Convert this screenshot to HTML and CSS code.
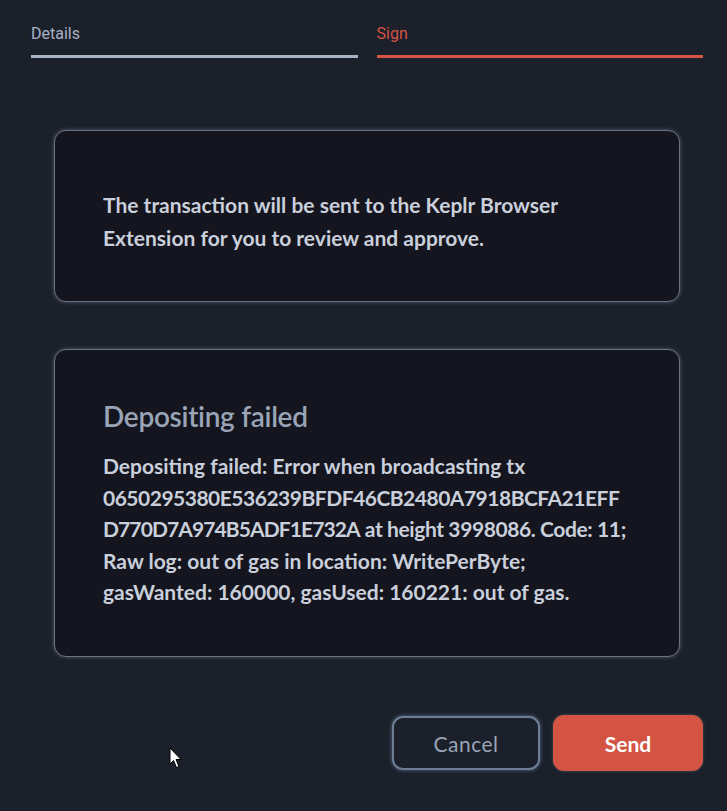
FILE: index.html
```html
<!DOCTYPE html>
<html>
<head>
<meta charset="utf-8">
<link rel="stylesheet" href="styles.css">
</head>
<body>
<div class="page">
  <div class="tabs">
    <div class="tab done">Details</div>
    <div class="tab active">Sign</div>
  </div>
  <div class="card info">
    <p class="text">The transaction will be sent to the Keplr Browser<br>Extension for you to review and approve.</p>
  </div>
  <div class="card error">
    <h2 class="title">Depositing failed</h2>
    <p class="text">Depositing failed: Error when broadcasting tx<br><span class="hex">0650295380E536239BFDF46CB2480A7918BCFA21EFF</span><br><span class="hex tight">D770D7A974B5ADF1E732A</span> <span class="tight">at height 3998086. Code: 11;</span><br>Raw log: out of gas in location: WritePerByte;<br>gasWanted: 160000, gasUsed: 160221: out of gas.</p>
  </div>
  <div class="actions">
    <button class="btn cancel">Cancel</button>
    <button class="btn send">Send</button>
  </div>
</div>
<svg class="cursor" width="14" height="22" viewBox="0 0 14 22"><path d="M1 1 L1 17 L4.5 13.5 L7.5 20.5 L10 19.5 L7 12.5 L12 12.5 Z" fill="#fff" stroke="#000" stroke-width="1"/></svg>
</body>
</html>
```
FILE: styles.css
```css
html, body { margin: 0; padding: 0; background: #1b202b; }
body { font-family: Lato, "Noto Sans", sans-serif; width: 727px; height: 811px; overflow: hidden; position: relative; }
.page { padding: 23px 24px 0 31px; }
.tabs { display: flex; gap: 19px; }
.tab { flex: 1; font-size: 16px; padding-bottom: 11px; border-bottom: 3px solid; line-height: 21px; font-family: Roboto, sans-serif; }
.tab.done { color: #a7b2c4; border-color: #a7b2c4; }
.tab.active { color: #d65445; border-color: #d65445; }
.card { margin: 0 23px 0 23px; background: #14151e; border: 1px solid #6c7385; border-radius: 12px; box-shadow: 0 0 4px rgba(150,160,180,0.45); padding: 0 48px; box-sizing: border-box; }
.info { margin-top: 72px; height: 172px; display: flex; align-items: center; }
.error { margin-top: 47px; height: 308px; padding-top: 47px; }
.text { margin: 0; font-size: 21px; line-height: 31.5px; font-weight: 700; color: #c9cfdb; letter-spacing: 0; white-space: nowrap; }
.info .text { padding-top: 10px; line-height: 33px; }
.hex { letter-spacing: -0.5px; }
.tight { letter-spacing: -0.4px; }
.hex.tight { letter-spacing: -0.9px; }
.title { margin: 0 0 15px 0; font-size: 28px; line-height: 38px; font-weight: 600; color: #9aa4b7; letter-spacing: -0.3px; }
.actions { display: flex; justify-content: flex-end; gap: 13px; margin-top: 58px; }
.btn { width: 150px; height: 56px; border-radius: 11px; font-family: Lato, sans-serif; font-size: 21px; cursor: pointer; }
.cancel { background: #1b202b; border: 2px solid #6e7d96; color: #9aa4b7; box-shadow: 0 0 4px rgba(140,160,190,0.6); width: 148px; height: 54px; margin-top: 1px; letter-spacing: 0.5px; }
.send { background: #d45444; border: none; color: #ffffff; font-weight: 700; box-shadow: 0 0 3px rgba(140,160,190,0.4); }
.cursor { position: absolute; left: 169px; top: 747px; }
```
